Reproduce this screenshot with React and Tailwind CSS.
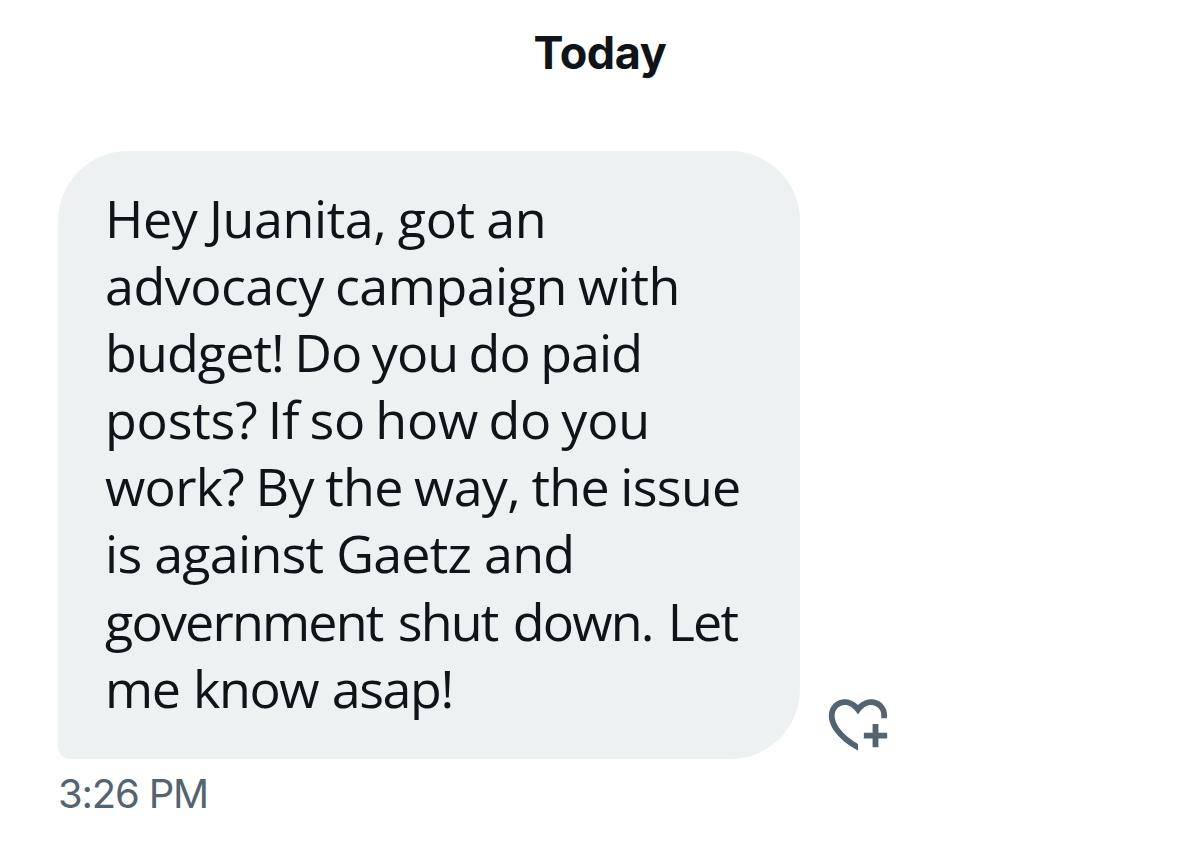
import React from 'react';

const lines = [
  { text: 'Hey Juanita, got an', style: 'tracking-[-0.4px] [word-spacing:-1.6px]' },
  { text: 'advocacy campaign with', style: 'tracking-[-0.5px] [word-spacing:-1.8px]' },
  { text: 'budget! Do you do paid', style: 'tracking-[-0.9px] [word-spacing:-2.3px]' },
  { text: 'posts? If so how do you', style: 'tracking-[-0.2px] [word-spacing:-3.1px]' },
  { text: 'work? By the way, the issue', style: 'tracking-[-0.7px] [word-spacing:-1.4px]' },
  { text: 'is against Gaetz and', style: 'tracking-[-0.74px]' },
  { text: 'government shut down. Let', style: 'tracking-[-1.8px] [word-spacing:3.4px]' },
  { text: 'me know asap!', style: 'tracking-[-1.4px] [word-spacing:1.4px]' },
];

const HeartPlusIcon = () => (
  <svg viewBox="0 0 24 24" className="h-[70px] w-[70px]" fill="currentColor" aria-hidden="true">
    <path d="M17 12v3h-2.998v2h3v3h2v-3h3v-2h-3.002v-3H17zm-5 6.839c-3.871-2.34-6.053-4.639-7.127-6.609-1.112-2.04-1.031-3.7-.479-4.82.561-1.13 1.667-1.84 2.91-1.91 1.222-.06 2.68.51 3.892 2.16l.806 1.09.805-1.09c1.211-1.65 2.668-2.22 3.89-2.16 1.242.07 2.347.78 2.908 1.91.334.677.49 1.554.321 2.59h2.011c.153-1.283-.039-2.469-.539-3.48-.887-1.79-2.647-2.91-4.601-3.01-1.65-.09-3.367.56-4.796 2.01-1.43-1.45-3.147-2.1-4.798-2.01-1.954.1-3.714 1.22-4.601 3.01-.896 1.81-.846 4.17.514 6.67 1.353 2.48 4.003 5.12 8.382 7.67l.502.299v-2.32z" />
  </svg>
);

const App = () => {
  return (
    <div className="h-[847px] w-[1200px] overflow-hidden bg-white text-[#0f1419]">
      {/* Date separator */}
      <h2 className="flex h-[151px] justify-center pt-[23px] font-['Inter',sans-serif] text-[45px] leading-[60px] font-bold tracking-[-0.4px]">
        Today
      </h2>

      {/* Message row */}
      <div className="flex items-end pl-[58px]">
        <div className="h-[608px] w-[742px] rounded-[70px] rounded-bl-[12px] bg-[#eef1f2] pt-[33px] pl-[47px] font-['Open_Sans',sans-serif] text-[52px] leading-[67.1px] font-[450]">
          {lines.map(({ text, style }) => (
            <p key={text} className={`whitespace-nowrap ${style}`}>
              {text}
            </p>
          ))}
        </div>
        <button type="button" aria-label="Add reaction" className="ml-[23px] text-[#536471]">
          <HeartPlusIcon />
        </button>
      </div>

      {/* Timestamp */}
      <p className="pt-[5px] pl-[58px] font-['Inter',sans-serif] text-[40px] leading-[60px] tracking-[-1.2px] text-[#536471]">
        3:26 PM
      </p>
    </div>
  );
};

export default App;
